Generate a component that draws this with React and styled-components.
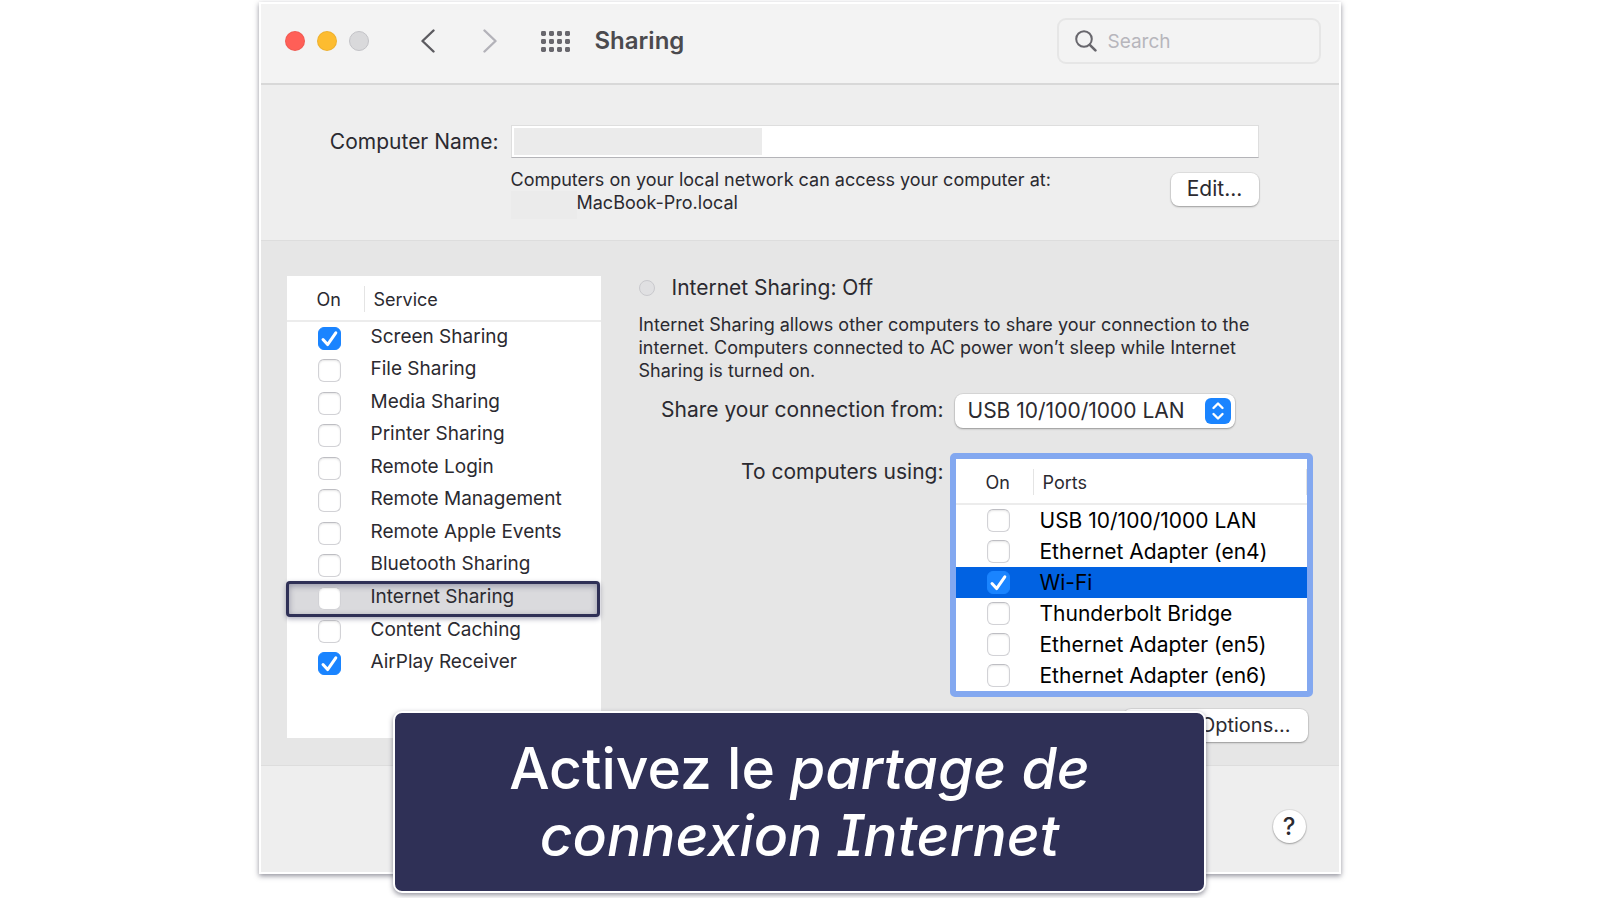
import React from "react"
import styled, { createGlobalStyle, css } from "styled-components"

const services = [
  { name: "Screen Sharing", on: true },
  { name: "File Sharing" },
  { name: "Media Sharing" },
  { name: "Printer Sharing" },
  { name: "Remote Login" },
  { name: "Remote Management" },
  { name: "Remote Apple Events" },
  { name: "Bluetooth Sharing" },
  { name: "Internet Sharing", current: true },
  { name: "Content Caching" },
  { name: "AirPlay Receiver", on: true },
]

const ports = [
  { name: "USB 10/100/1000 LAN" },
  { name: "Ethernet Adapter (en4)" },
  { name: "Wi-Fi", on: true, selected: true },
  { name: "Thunderbolt Bridge" },
  { name: "Ethernet Adapter (en5)" },
  { name: "Ethernet Adapter (en6)" },
]

const CheckBox = ({ id, on }) => (
  <CheckCtr>
    <CheckInput type="checkbox" id={id} defaultChecked={on} />
    <svg width="23" height="23" viewBox="0 0 23 23" fill="none">
      <path
        d="M5 12.5 L9.6 17.6 L17.8 5.8"
        stroke="#fff"
        strokeWidth="3"
        strokeLinecap="round"
        strokeLinejoin="round"
      />
    </svg>
  </CheckCtr>
)

const Toolbar = () => (
  <ToolbarCtr>
    <Lights>
      <Light type="button" aria-label="Close" $color="#ff5f57" />
      <Light type="button" aria-label="Minimize" $color="#fdbc30" />
      <Light type="button" aria-label="Zoom" $color="#d9d9db" $edge="#c3c3c7" />
    </Lights>
    <NavCtr>
      <NavButton type="button" aria-label="Back" $color="#5c5b60">
        <svg width="14" height="24" viewBox="0 0 14 24" fill="none">
          <path d="M12.5 1.5 L1.5 12 L12.5 22.5" />
        </svg>
      </NavButton>
      <NavButton type="button" aria-label="Forward" $color="#b3b2b9">
        <svg width="14" height="24" viewBox="0 0 14 24" fill="none">
          <path d="M1.5 1.5 L12.5 12 L1.5 22.5" />
        </svg>
      </NavButton>
    </NavCtr>
    <GridButton type="button" aria-label="Show All">
      <svg width="29" height="21" viewBox="0 0 29 21" fill="#68676d">
        {[0, 8, 16].map((y) =>
          [0, 8, 16, 24].map((x) => (
            <rect key={`${x}-${y}`} x={x} y={y} width="5" height="5" rx="1.4" />
          ))
        )}
      </svg>
    </GridButton>
    <Title>Sharing</Title>
    <SearchBox>
      <svg width="22" height="22" viewBox="0 0 22 22" fill="none">
        <circle cx="9" cy="9" r="7.8" stroke="#68676d" strokeWidth="2" />
        <path
          d="M14.8 14.8 L20.4 20.4"
          stroke="#68676d"
          strokeWidth="2.6"
          strokeLinecap="round"
        />
      </svg>
      <SearchInput type="text" placeholder="Search" aria-label="Search" />
    </SearchBox>
  </ToolbarCtr>
)

const ComputerName = () => (
  <NameCtr>
    <NameLabel htmlFor="computer-name">Computer Name:</NameLabel>
    <NameField>
      <NameInput id="computer-name" type="text" />
      <NameMask />
    </NameField>
    <NameHint>
      <div>
        Computers on your local network can access your computer at:
        <HostLine>
          <HostMask />
          MacBook-Pro.local
        </HostLine>
      </div>
      <EditButton type="button">Edit...</EditButton>
    </NameHint>
  </NameCtr>
)

const ServiceList = () => (
  <ServiceCtr>
    <ServiceTable>
      <thead>
        <tr>
          <OnHead>On</OnHead>
          <NameHead>Service</NameHead>
        </tr>
      </thead>
      <tbody>
        {services.map(({ name, on, current }, i) => (
          <ServiceRow key={name} $current={current}>
            <CheckCell>
              <CheckBox id={`service-${i}`} on={on} />
            </CheckCell>
            <ServiceCell>
              <label htmlFor={`service-${i}`}>{name}</label>
            </ServiceCell>
          </ServiceRow>
        ))}
      </tbody>
    </ServiceTable>
  </ServiceCtr>
)

const PortList = () => (
  <PortCtr>
    <PortTable aria-labelledby="ports-label">
      <thead>
        <tr>
          <OnHead>On</OnHead>
          <NameHead $closed>Ports</NameHead>
        </tr>
      </thead>
      <tbody>
        {ports.map(({ name, on, selected }, i) => (
          <PortRow key={name} $selected={selected}>
            <CheckCell>
              <CheckBox id={`port-${i}`} on={on} />
            </CheckCell>
            <PortCell>
              <label htmlFor={`port-${i}`}>{name}</label>
            </PortCell>
          </PortRow>
        ))}
      </tbody>
    </PortTable>
  </PortCtr>
)

const Details = () => (
  <DetailsCtr>
    <Status>
      <StatusDot />
      Internet Sharing: Off
    </Status>
    <Info>
      Internet Sharing allows other computers to share your connection to the
      <br />
      internet. Computers connected to AC power won’t sleep while Internet
      <br />
      Sharing is turned on.
    </Info>
    <Settings>
      <FormLabel htmlFor="share-from">Share your connection from:</FormLabel>
      <SelectCtr>
        <Select id="share-from">
          <option>USB 10/100/1000 LAN</option>
          <option>Wi-Fi</option>
        </Select>
        <SelectIcon>
          <svg width="26" height="26" viewBox="0 0 26 26" fill="none">
            <path
              d="M8.5 10 L13 5.5 L17.5 10 M8.5 16 L13 20.5 L17.5 16"
              stroke="#fff"
              strokeWidth="2.4"
              strokeLinecap="round"
              strokeLinejoin="round"
            />
          </svg>
        </SelectIcon>
      </SelectCtr>
      <PortsLabel id="ports-label">To computers using:</PortsLabel>
      <PortList />
    </Settings>
    <OptionsButton type="button">Wi-Fi Options...</OptionsButton>
  </DetailsCtr>
)

const App = () => (
  <>
    <GlobalStyle />
    <Window>
      <Toolbar />
      <ComputerName />
      <Main>
        <ServiceList />
        <Details />
      </Main>
      <Footer>
        <HelpButton type="button" aria-label="Help">
          ?
        </HelpButton>
      </Footer>
      <Callout>
        <CalloutLine>
          Activez le <em>partage de</em>
        </CalloutLine>
        <CalloutLine>
          <em>connexion Internet</em>
        </CalloutLine>
      </Callout>
    </Window>
  </>
)

export default App

const GlobalStyle = createGlobalStyle`
  * {
    box-sizing: border-box;
  }

  body {
    margin: 0;
    background: #fff;
    color: #2b2a30;
    font-family: Inter, "Liberation Sans", sans-serif;
    font-size: 19px;
  }

  button, input, select {
    font-family: inherit;
    color: inherit;
  }
`

const Window = styled.main`
  position: relative;
  width: 100%;
  max-width: 1082px;
  margin: 2px auto 24px;
  border: 2px solid #fff;
  background: #eeeeee;
  box-shadow: 0 2px 5px rgba(40, 40, 60, 0.5);
`

const ToolbarCtr = styled.header`
  display: flex;
  align-items: center;
  height: 81px;
  padding: 0 18px 5px 24px;
  background: #f3f3f3;
  border-bottom: 2px solid #d8d8d8;
`

const Lights = styled.div`
  display: flex;
  gap: 12px;
  margin-right: 52px;
`

const Light = styled.button`
  width: 20px;
  height: 20px;
  padding: 0;
  border: 1px solid ${({ $edge }) => $edge || "rgba(0, 0, 0, 0.06)"};
  border-radius: 50%;
  background: ${({ $color }) => $color};
`

const NavCtr = styled.div`
  display: flex;
  gap: 48px;
  margin-right: 44px;
`

const NavButton = styled.button`
  display: flex;
  padding: 0;
  border: none;
  background: none;

  path {
    stroke: ${({ $color }) => $color};
    stroke-width: 2.4;
    stroke-linecap: round;
    stroke-linejoin: round;
  }
`

const GridButton = styled.button`
  display: flex;
  margin-right: 25px;
  padding: 0;
  border: none;
  background: none;
`

const Title = styled.h1`
  flex: 1;
  margin: 0;
  padding-bottom: 2px;
  color: #4b4a4e;
  font-size: 24px;
  font-weight: 600;
`

const SearchBox = styled.label`
  display: flex;
  align-items: center;
  gap: 11px;
  width: 264px;
  height: 46px;
  padding: 0 16px;
  border: 2px solid #e6e6e6;
  border-radius: 9px;
`

const SearchInput = styled.input`
  flex: 1;
  min-width: 0;
  padding: 1px 0 0;
  border: none;
  outline: none;
  background: none;
  font-size: 19px;

  &::placeholder {
    color: #b7b6bc;
  }
`

const NameCtr = styled.section`
  display: grid;
  grid-template-columns: 238px 1fr;
  column-gap: 12px;
  padding: 40px 80px 21px 0;
`

const NameLabel = styled.label`
  align-self: center;
  font-size: 21px;
  text-align: right;
`

const NameField = styled.div`
  position: relative;
`

const NameInput = styled.input`
  display: block;
  width: 100%;
  height: 33px;
  padding: 0 6px;
  border: 1px solid #dedede;
  border-bottom: 1px solid #b4b4b8;
  outline: none;
  background: #fff;
  font-size: 19px;
`

const NameMask = styled.span`
  position: absolute;
  top: 3px;
  left: 3px;
  width: 248px;
  height: 27px;
  background: #ebebeb;
`

const NameHint = styled.div`
  display: flex;
  grid-column: 2;
  justify-content: space-between;
  margin-top: 10px;
  font-size: 18px;
  line-height: 23px;
`

const HostLine = styled.div`
  display: flex;
`

const HostMask = styled.span`
  width: 66px;
  height: 28px;
  background: #ebebeb;
`

const buttonFace = css`
  border: none;
  border-radius: 8px;
  background: #fff;
  box-shadow: 0 0 0 1px rgba(0, 0, 0, 0.06), 0 1px 2px rgba(0, 0, 0, 0.3);
`

const EditButton = styled.button`
  ${buttonFace};
  width: 88px;
  height: 33px;
  margin-top: 5px;
  padding: 0 0 2px;
  font-size: 21px;
`

const Main = styled.section`
  display: flex;
  align-items: flex-start;
  gap: 38px;
  padding: 35px 26px 23px;
  background: #e6e6e6;
  border-top: 1px solid #dddddd;
  border-bottom: 1px solid #dddddd;
`

const ServiceCtr = styled.div`
  isolation: isolate;
  flex: 0 0 314px;
  min-height: 462px;
  background: #fff;
`

const tableBase = css`
  width: 100%;
  border-collapse: separate;
  border-spacing: 0;

  th,
  td {
    padding: 0;
    font-weight: 400;
    text-align: left;
  }
`

const ServiceTable = styled.table`
  ${tableBase};
  height: 404px;
`

const OnHead = styled.th`
  width: 77px;
  height: 46px;
  border-bottom: 2px solid #ececec;
  font-size: 18px;

  && {
    padding: 3px 0 0 30px;
  }
`

const NameHead = styled.th`
  height: 46px;
  border-bottom: 2px solid #ececec;
  background: linear-gradient(#e4e4e4, #e4e4e4) 0 10px / 1px 26px no-repeat;
  font-size: 18px;

  && {
    padding: 3px 0 0 10px;
  }

  ${({ $closed }) =>
    $closed &&
    css`
      background: linear-gradient(#e4e4e4, #e4e4e4) 0 10px / 1px 26px no-repeat,
        linear-gradient(#e4e4e4, #e4e4e4) 100% 10px / 1px 26px no-repeat;
    `}
`

const ServiceRow = styled.tr`
  ${({ $current }) =>
    $current &&
    css`
      position: relative;

      &::after {
        content: "";
        position: absolute;
        z-index: -1;
        inset: -1px 1px -2px -1px;
        border: 3px solid #2f3056;
        border-radius: 4px;
        background: #dadadd;
        box-shadow: inset 0 2px 6px rgba(47, 48, 86, 0.4),
          0 2px 5px rgba(47, 48, 86, 0.4);
      }
    `}
`

const CheckCell = styled.td`
  && {
    padding-left: 31px;
  }
`

const ServiceCell = styled.td`
  font-size: 19px;
  line-height: 24px;

  && {
    padding: 0 0 3px 7px;
  }
`

const CheckCtr = styled.span`
  display: grid;
  width: 23px;
  height: 23px;

  svg {
    display: none;
    grid-area: 1 / 1;
    pointer-events: none;
  }

  input:checked + svg {
    display: block;
  }
`

const CheckInput = styled.input`
  grid-area: 1 / 1;
  appearance: none;
  width: 23px;
  height: 23px;
  margin: 0;
  border: 1px solid #d2d2d6;
  border-top-color: #bebec3;
  border-radius: 6px;
  background: #fff;
  box-shadow: inset 0 1px 2px rgba(0, 0, 0, 0.1);

  &:checked {
    border-color: #1a84ff;
    background: #1a84ff;
    box-shadow: none;
  }
`

const DetailsCtr = styled.div`
  display: flex;
  flex: 1;
  flex-direction: column;
`

const Status = styled.div`
  display: flex;
  align-items: center;
  gap: 17px;
  font-size: 21px;
  line-height: 24px;
`

const StatusDot = styled.span`
  width: 16px;
  height: 16px;
  border: 1px solid #c9c9cd;
  border-radius: 50%;
  background: #e0e0e2;
`

const Info = styled.p`
  margin: 13px 0 12px;
  font-size: 18px;
  line-height: 23px;
  white-space: nowrap;
`

const Settings = styled.div`
  display: grid;
  grid-template-columns: 305px 1fr;
  gap: 25px 6px;
`

const FormLabel = styled.label`
  align-self: center;
  padding-bottom: 3px;
  font-size: 21px;
  text-align: right;
`

const PortsLabel = styled.div`
  padding-top: 6px;
  font-size: 21px;
  text-align: right;
`

const SelectCtr = styled.div`
  display: grid;
  align-items: center;
  width: 280px;
  margin-left: 5px;
`

const Select = styled.select`
  ${buttonFace};
  grid-area: 1 / 1;
  appearance: none;
  width: 100%;
  height: 34px;
  padding: 0 36px 2px 13px;
  font-size: 21px;
`

const SelectIcon = styled.span`
  display: flex;
  grid-area: 1 / 1;
  justify-self: end;
  margin-right: 4px;
  border-radius: 6px;
  background: #1a84ff;
  pointer-events: none;
`

const PortCtr = styled.div`
  border: 6px solid #83a8f0;
  border-radius: 5px;
  background: #fff;
`

const PortTable = styled.table`
  ${tableBase};
`

const PortRow = styled.tr`
  height: 31px;
  color: #000;
  background: ${({ $selected }) => ($selected ? "#0162e2" : "transparent")};
`

const PortCell = styled.td`
  font-size: 21px;
  line-height: 24px;

  && {
    padding-left: 7px;
  }
`

const OptionsButton = styled.button`
  ${buttonFace};
  align-self: flex-end;
  width: 185px;
  height: 33px;
  margin: 12px 5px 0 0;
  padding: 0 17px 2px;
  font-size: 20px;
  text-align: right;
`

const Footer = styled.footer`
  display: flex;
  justify-content: flex-end;
  height: 106px;
  padding: 44px 33px 0 0;
`

const HelpButton = styled.button`
  ${buttonFace};
  width: 33px;
  height: 33px;
  padding: 0;
  border-radius: 50%;
  font-size: 24px;
  font-weight: 500;
  line-height: 33px;
`

const Callout = styled.div`
  position: absolute;
  right: 0;
  bottom: -21px;
  left: 0;
  width: 813px;
  margin: 0 auto;
  padding: 22px 20px;
  border: 2px solid #fff;
  border-radius: 9px;
  background: #2f3056;
  box-shadow: 0 2px 5px rgba(40, 40, 60, 0.5);
  color: #fff;
  font-size: 57px;
  font-weight: 500;
  font-feature-settings: "cv08", "cv11";
  text-align: center;
`

const CalloutLine = styled.div`
  line-height: 67px;
`
